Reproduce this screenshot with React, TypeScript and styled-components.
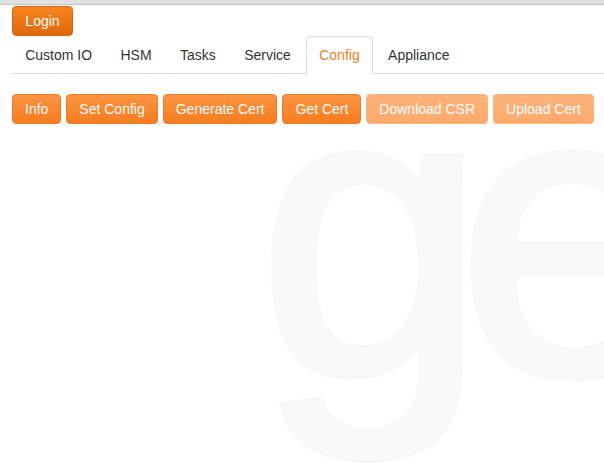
import styled, { createGlobalStyle } from 'styled-components';

const GlobalStyle = createGlobalStyle`
  html, body {
    margin: 0;
    padding: 0;
    background: #ffffff;
  }
  body {
    font-family: "Liberation Sans", Arial, sans-serif;
    font-size: 14px;
    color: #333333;
  }
`;

const tabs = ['Custom IO', 'HSM', 'Tasks', 'Service', 'Config', 'Appliance'];

const actions = [
  { label: 'Info', disabled: false },
  { label: 'Set Config', disabled: false },
  { label: 'Generate Cert', disabled: false },
  { label: 'Get Cert', disabled: false },
  { label: 'Download CSR', disabled: true },
  { label: 'Upload Cert', disabled: true },
];

const App = () => {
  return (
    <>
      <GlobalStyle />
      <Page>
        <Watermark aria-hidden="true">ge</Watermark>
        <TopStrip />
        <Content>
          <LoginButton>Login</LoginButton>
          <TabList>
            {tabs.map((t) => (
              <Tab key={t} $active={t === 'Config'}>
                {t}
              </Tab>
            ))}
          </TabList>
          <ActionBar>
            {actions.map((a) => (
              <ActionButton key={a.label} disabled={a.disabled}>
                {a.label}
              </ActionButton>
            ))}
          </ActionBar>
        </Content>
      </Page>
    </>
  );
};

const Page = styled.div`
  position: relative;
  width: 604px;
  height: 470px;
  overflow: hidden;
  background: #ffffff;
`;

// faint brand lettering behind the page
const Watermark = styled.div`
  position: absolute;
  top: 27px;
  left: 258px;
  font-family: "Liberation Sans", Arial, sans-serif;
  font-size: 410px;
  line-height: 1;
  letter-spacing: -29px;
  color: #f8f8f8;
  -webkit-text-stroke: 8px #f8f8f8;
  white-space: nowrap;
  user-select: none;
  pointer-events: none;
`;

const TopStrip = styled.div`
  position: relative;
  height: 4px;
  background: #e0e0e0;
  border-bottom: 1px solid #c4c4c4;
`;

const Content = styled.div`
  position: relative;
  display: flex;
  flex-direction: column;
  align-items: flex-start;
  padding: 1px 0 0 12px;
`;

const baseButton = `
  height: 30px;
  padding: 0 12px;
  border-radius: 4px;
  font-family: "Liberation Sans", Arial, sans-serif;
  font-size: 14px;
  line-height: 28px;
  color: #ffffff;
  cursor: pointer;
`;

const LoginButton = styled.button`
  ${baseButton}
  width: 61px;
  padding: 0;
  border: 1px solid #d9650e;
  background: linear-gradient(to bottom, #f6841f 0%, #e0690b 100%);
`;

const TabList = styled.ul`
  display: flex;
  align-self: stretch;
  list-style: none;
  margin: 0;
  padding: 0;
  border-bottom: 1px solid #dddddd;
`;

const Tab = styled.li<{ $active?: boolean }>`
  margin: 0 2px -1px 0;
  padding: 8px 12.2px 8px;
  line-height: 20px;
  border: 1px solid ${(p) => (p.$active ? '#dddddd' : 'transparent')};
  border-bottom-color: transparent;
  border-radius: 4px 4px 0 0;
  background: ${(p) => (p.$active ? '#ffffff' : 'transparent')};
  color: ${(p) => (p.$active ? '#f27d1d' : '#333333')};
  cursor: pointer;
`;

const ActionBar = styled.div`
  display: flex;
  gap: 5px;
  margin-top: 20px;
`;

const ActionButton = styled.button`
  ${baseButton}
  border: 1px solid #ec7a22;
  background: linear-gradient(to bottom, #fd9342 0%, #f57d1f 100%);

  &:disabled {
    cursor: default;
    border-color: #f9b27c;
    background: linear-gradient(to bottom, #fdb27a 0%, #fcaa6c 100%);
  }
`;

export default App;
